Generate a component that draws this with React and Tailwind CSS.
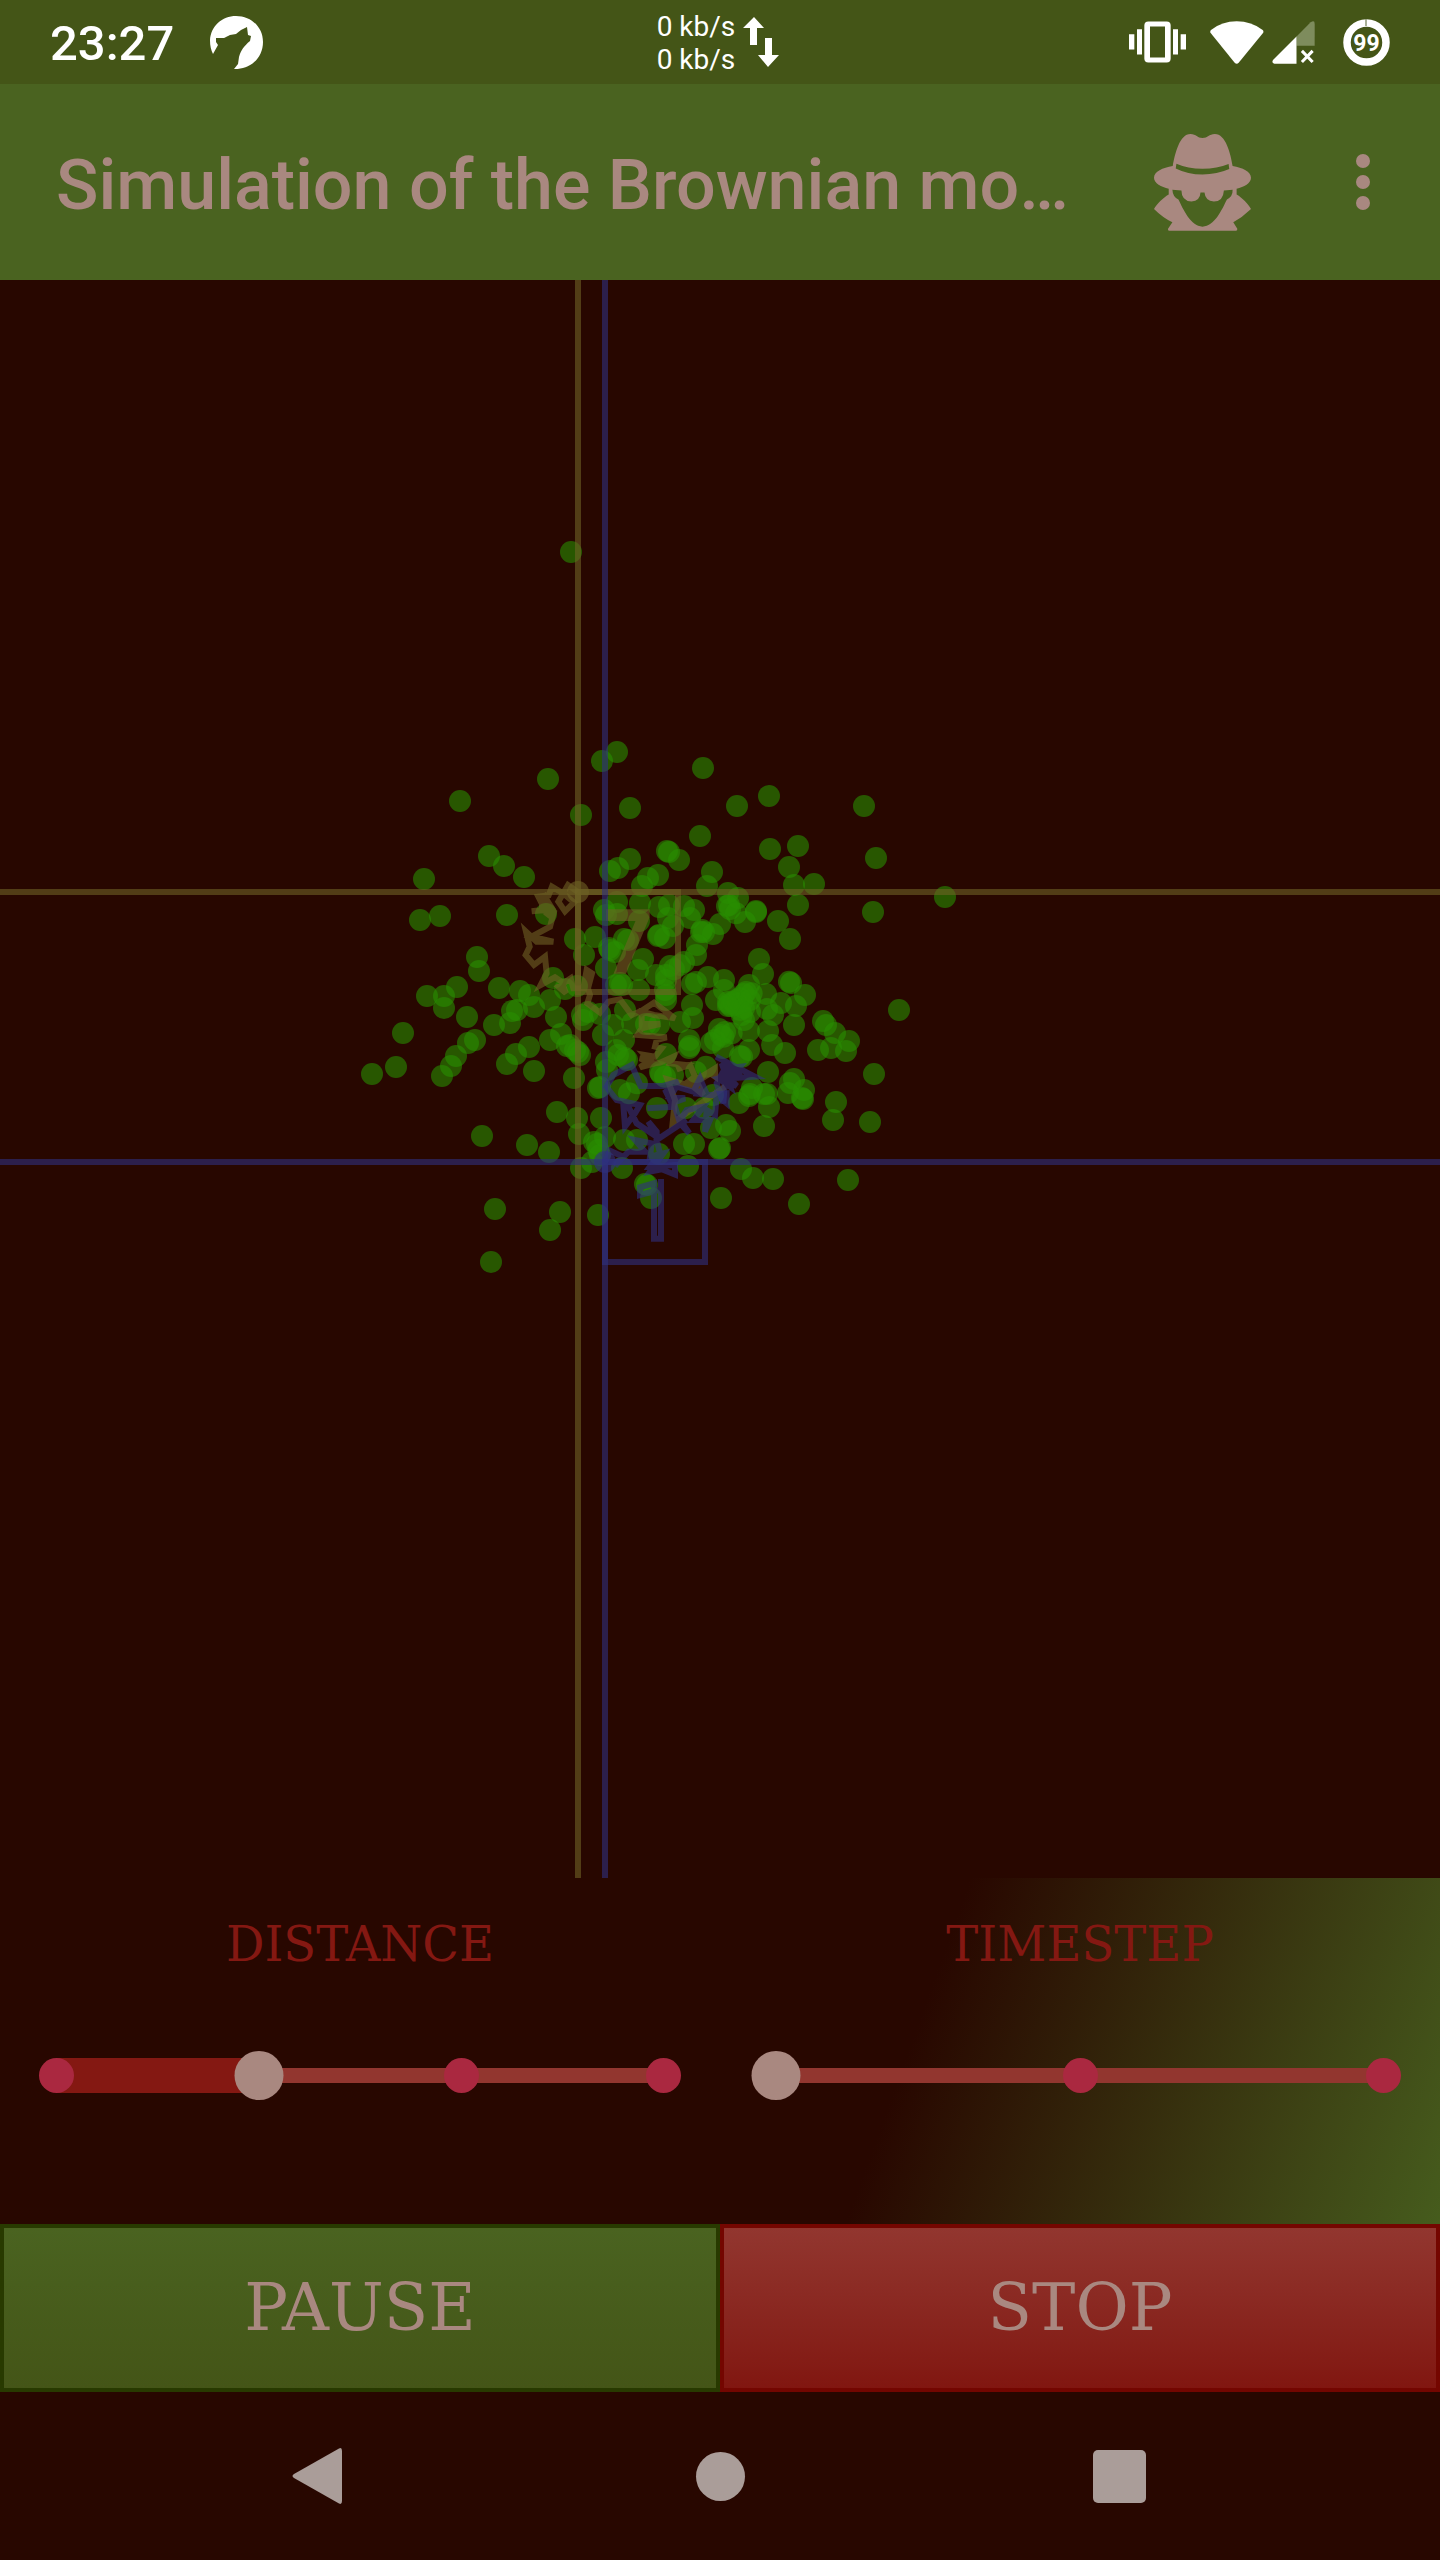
import React, { useState } from "react";

// Particle positions, grouped in tiles and given in thirds of a canvas unit.
const tiles = [
  { x: 571, y: 552, points: [[0, 0]] },
  {
    x: 350, y: 720,
    points: [[594,177],[330,243],[417,408],[462,438],[522,471],[222,477],[210,600],[270,588],[471,585],[588,582],[381,711],[387,753],[609,774]],
  },
  {
    x: 350, y: 980,
    points: [[231,48],[282,48],[321,21],[447,24],[510,33],[537,45],[282,84],[351,111],[552,81],[486,93],[501,90],[432,135],[480,129],[618,111],[159,159],[66,282],[138,261],[375,180],[354,189],[318,228],[303,258],[276,288],[537,201],[498,222],[471,252],[552,273],[600,180],[621,396],[396,468],[531,495],[597,516],[435,687],[630,696],[600,750],[423,846]],
  },
  {
    x: 560, y: 720,
    points: [[171,96],[126,123],[429,144],[210,264],[531,258],[627,228],[63,285],[420,348],[321,393],[327,396],[357,420],[210,417],[174,444],[150,453],[456,456],[264,474],[294,465],[246,498],[441,498],[630,387],[714,378],[687,441],[702,495],[714,555],[504,519],[534,534],[171,546],[240,549],[132,570],[138,585],[171,582],[237,603],[297,561],[327,555],[372,558],[402,570],[507,555],[510,567],[501,558],[588,573],[588,576],[555,606],[528,580],[654,603],[690,657],[324,594],[390,594],[480,612],[423,636],[432,636],[459,642],[426,630],[45,657],[105,651],[192,657],[204,660],[339,618],[294,648],[315,654],[297,645]],
  },
  {
    x: 560, y: 940,
    points: [[72,45],[150,30],[147,24],[165,36],[249,57],[234,90],[138,84],[288,105],[411,15],[408,45],[372,66],[360,75],[342,88],[330,78],[318,105],[318,120],[51,138],[15,147],[168,135],[180,129],[186,135],[237,150],[396,132],[408,126],[315,150],[318,165],[318,180],[396,195],[399,234],[360,246],[66,225],[84,216],[69,240],[120,222],[195,210],[216,250],[159,255],[129,285],[192,300],[168,330],[297,255],[270,252],[258,252],[174,345],[201,360],[195,354],[-30,180],[3,282],[30,315],[21,318],[45,330],[54,336],[60,345],[42,414],[138,366],[141,390],[120,441],[114,444],[180,450],[207,460],[231,430],[318,342],[303,402],[315,410],[300,396],[339,405],[387,300],[387,324],[390,318],[408,396],[291,504],[378,504],[51,534],[123,534],[57,582],[135,591],[192,600],[231,600],[102,606],[111,612],[115,630],[120,645],[96,666],[63,684],[186,684],[297,642],[372,612],[402,612],[384,678],[255,732],[261,735],[273,774],[114,825]],
  },
  {
    x: 700, y: 980,
    points: [[48,60],[72,30],[84,66],[87,72],[93,78],[99,66],[105,75],[110,60],[120,54],[126,66],[132,42],[138,36],[147,15],[24,-9],[72,0],[177,-63],[189,-18],[155,40],[150,60],[120,90],[125,105],[132,120],[132,84],[150,96],[84,78],[198,42],[201,87],[219,105],[267,5],[273,9],[315,45],[288,78],[243,69],[282,135],[57,147],[63,165],[75,156],[70,170],[45,180],[33,189],[95,160],[147,153],[204,153],[147,210],[120,228],[126,230],[216,195],[255,219],[69,204],[369,123],[378,135],[405,159],[354,210],[393,204],[447,183],[438,213],[597,90],[204,276],[282,297],[270,309],[264,339],[312,330],[306,354],[309,357],[156,324],[147,348],[150,342],[117,369],[207,381],[201,342],[192,342],[192,438],[78,435],[90,453],[57,507],[60,504],[33,444],[12,384],[39,345],[18,260],[522,282],[408,366],[399,420],[510,426],[123,567],[159,594],[219,597],[444,600],[297,672],[63,654]],
  },
  { x: 740, y: 740, points: [[372,198],[222,432],[408,354],[615,471],[399,516]] },
];

const particles = tiles.flatMap((t) => t.points.map(([x, y]) => [t.x + x / 3, t.y + y / 3]));

function WolfIcon() {
  return (
    <svg viewBox="0 0 53 53" className="h-[53px] w-[53px] fill-white" aria-hidden="true">
      <path d="M26 0C12 0 1 10 0 24C0 30 1 34 3 38L8 29L6 26V22H14L20 19L26 18L31 14L37 11L38 19L41 20L40 25C34 30 31 34 29 41L28 48L24 53C40 54 53 42 53 26C53 11 41 0 26 0Z" />
    </svg>
  );
}

function TrafficIcon() {
  return (
    <svg viewBox="0 0 36 50" className="h-[50px] w-9 fill-white" aria-hidden="true">
      <path d="M11 0L21 11H14V28H7V11H0ZM22 21H29V38H36L25 50L15 38H22Z" />
    </svg>
  );
}

function VibrateIcon() {
  return (
    <svg viewBox="30 62 171 125" className="h-[42px] w-[57px] fill-white" aria-hidden="true">
      <path d="M30 101H46V147H30ZM54 86H69V162H54ZM162 86H177V162H162ZM185 101H201V147H185Z" />
      <path fillRule="evenodd" d="M88 63H143Q155 63 155 75V174Q155 186 143 186H88Q76 186 76 174V75Q76 63 88 63ZM93 78V171H138V78Z" />
    </svg>
  );
}

function WifiIcon() {
  return (
    <svg viewBox="272 58 162 129" className="h-[43px] w-[54px] fill-white" aria-hidden="true">
      <path d="M275 85Q308 59 352 59T430 85Q434 89 431 94L358 183Q352 189 346 183L274 94Q271 89 275 85Z" />
    </svg>
  );
}

function SignalIcon() {
  return (
    <svg viewBox="458 65 128 128" className="h-[43px] w-[43px]" aria-hidden="true">
      <path d="M531 111L573 69Q585 61 585 73V139H531Z" fill="#7e8c5d" />
      <path d="M531 111V192H465Q456 190 461 181Z" fill="#fff" />
      <path d="M547 154L579 187M579 154L547 187" stroke="#fff" strokeWidth="9" />
    </svg>
  );
}

function BatteryIcon() {
  return (
    <svg viewBox="0 0 47 47" className="h-[47px] w-[47px]" role="img" aria-label="Battery 99 percent">
      <circle cx="23.5" cy="23.5" r="19.500" fill="none" stroke="#fff" strokeWidth="7.500" />
      <path d="M23 0V7" stroke="#8b9673" strokeWidth="1.500" />
      <text x="23.5" y="32" textAnchor="middle" fill="#fff" fontSize="23" fontWeight="700">
        99
      </text>
    </svg>
  );
}

function IncognitoIcon() {
  return (
    <svg viewBox="101 401 290 290" className="h-[97px] w-[97px] fill-[#a98880]" aria-hidden="true">
      <path
        fillRule="evenodd"
        d="M157 497C164 458 178 401 210 401C228 401 230 413 246 413S265 401 283 401C315 401 330 458 336 497C366 502 391 514 391 532C391 548 370 560 348 565V582C365 592 382 610 391 625Q365 650 338 665L350 684Q351 690 346 690H147Q141 690 143 684L156 665Q126 650 101 625C110 610 128 592 145 582V565C123 560 101 548 101 532C101 514 127 502 157 497ZM168 490L166 504Q202 522 246 522T326 506L324 491Q290 505 246 505T168 490ZM156 568Q157 590 174 597C188 625 210 677 246 678C283 677 305 625 319 597Q337 588 336 568L310 570Q308 603 280 603Q254 601 252 576H240Q239 601 213 603Q183 601 183 570Z"
      />
    </svg>
  );
}

function BrownianCanvas() {
  return (
    <svg viewBox="0 280 1440 1598" className="block h-auto w-full" role="img" aria-label="Brownian motion particles and trails">
      <g fill="#288e00" fillOpacity="0.6">
        {particles.map(([x, y], i) => (
          <circle key={i} cx={x} cy={y} r="11" />
        ))}
      </g>
      <g stroke="#6e6324" strokeOpacity="0.6" fill="none" strokeWidth="6">
        <path d="M578 280V1878" />
        <path d="M0 892H1440" />
        <path d="M578 892H678V992H578Z" />
        <circle cx="578" cy="892" r="11" fill="#6e6324" fillOpacity="0.6" stroke="none" />
        <g transform="translate(560 940) scale(0.33333)" strokeWidth="18">
          <path d="M54 -144L24 -165L-5 -115L15 -86L42 -113L10 -140L-24 -160L-34 -134L-65 -130L-55 -110L-44 -127L-30 -105L-54 -110L-54 -90L-85 -86L-40 -90L-20 -65L-40 -80L-35 -100L-18 -85L-30 -40L-85 -10L-20 5L-70 5L-102 -25L-91 20L-103 45L-78 75L-45 50L-40 100L-58 135L-15 112L5 125L18 160L-5 140L32 115L40 145L70 145L80 90L96 100L84 145L90 165L82 190L120 218L145 185L180 178L215 225L245 212L282 188L345 235L282 225L245 215V252H300L245 265L232 285L320 292L290 300L285 320L305 325L285 350L255 345L265 355L240 355L262 365L240 382L285 370L300 368L340 350L330 370L375 375L350 388L390 375L405 410L372 435L425 410L465 385V410L450 400L410 425L430 465L400 440L322 418L345 480L338 548L495 440" />
          <path d="M138 -66H240L174 92H192L260 -70V-83H138" />
        </g>
      </g>
      <g stroke="#2f317f" strokeOpacity="0.6" fill="none" strokeWidth="6">
        <path d="M605 280V1878" />
        <path d="M0 1162H1440" />
        <path d="M605 1162H705V1262H605Z" />
        <circle cx="605" cy="1162" r="11" fill="#2f317f" fillOpacity="0.6" stroke="none" />
        <g transform="translate(560 940) scale(0.33333)" strokeWidth="18">
          <path d="M135 666L150 632L185 648L165 678L205 635H255L225 600L275 610L270 650L310 640L270 695L305 688L345 704V675L270 680L300 640L290 600L380 540L290 600V575L265 545L290 590L230 550L205 500L190 495L195 560L225 520L240 495L170 480L150 455L140 440L160 405L215 375L242 438H310L355 425L318 455L335 490L375 475L330 470L350 440L400 455L420 415L435 450L400 460L450 465L500 460V490L470 465L465 525L440 510L435 575L450 540L400 540L430 500L380 510L360 540L388 580L360 550L345 500L262 505" />
          <path d="M468 350L585 410L510 415L530 438L495 425L490 490L470 430L495 385L540 380L520 405L485 370L510 440L475 415L545 395" />
          <path d="M303 717V896H282V730L240 742V765L295 750" />
        </g>
      </g>
    </svg>
  );
}

function StepSlider({ id, label, steps, initial }) {
  const [value, setValue] = useState(initial);
  const percent = `${(value / (steps - 1)) * 100}%`;
  return (
    <div className="flex flex-1 flex-col">
      <label
        htmlFor={id}
        className="pt-9 text-center text-[48px] leading-[60px] text-[#841812] [font-family:'DejaVu_Serif',serif]"
      >
        {label}
      </label>
      <div className="relative mx-14 mt-[77px] h-[49px]">
        <div className="absolute inset-x-0 top-[17px] h-[15px] bg-[#92362f]" />
        <div className="absolute left-0 top-[7px] h-[35px] bg-[#841812]" style={{ width: percent }} />
        <div className="absolute -inset-x-[17px] top-[7px] flex justify-between">
          {Array.from({ length: steps }, (_, i) => (
            <span
              key={i}
              className={i === value ? "invisible size-[35px]" : "size-[35px] rounded-full bg-[#aa2840]"}
            />
          ))}
        </div>
        <div
          className="absolute top-0 size-[49px] -translate-x-1/2 rounded-full bg-[#a98880]"
          style={{ left: percent }}
        />
        <input
          id={id}
          type="range"
          min="0"
          max={steps - 1}
          step="1"
          value={value}
          onChange={(e) => setValue(Number(e.target.value))}
          className="absolute inset-0 h-full w-full cursor-pointer opacity-0"
        />
      </div>
    </div>
  );
}

export default function App() {
  return (
    <div className="flex min-h-screen flex-col bg-[#280700] [font-family:Roboto,sans-serif]">
      <div className="grid h-[84px] grid-cols-[1fr_auto_1fr] items-center bg-[#445517] px-[50px] text-white">
        <div className="flex items-center gap-9">
          <span className="pt-1 text-[49px] leading-[60px] font-medium">23:27</span>
          <WolfIcon />
        </div>
        <div className="flex items-center gap-2 pr-1">
          <div className="pt-0.5 text-[28px] leading-[33px]">
            <p>0 kb/s</p>
            <p>0 kb/s</p>
          </div>
          <TrafficIcon />
        </div>
        <div className="flex items-center justify-end">
          <VibrateIcon />
          <span className="w-6" />
          <WifiIcon />
          <span className="w-2" />
          <SignalIcon />
          <span className="w-7" />
          <BatteryIcon />
        </div>
      </div>

      <header className="flex h-[196px] items-center bg-[#4a6320] pr-[29px] pl-14 text-[#a98880]">
        <h1 className="min-w-0 flex-1 truncate pt-1.5 text-[70px] leading-[84px] font-medium">
          Simulation of the Brownian mo…
        </h1>
        <button type="button" aria-label="Incognito" className="mr-16">
          <IncognitoIcon />
        </button>
        <button type="button" aria-label="More options" className="flex w-24 flex-col items-center gap-[7px] py-4">
          <span className="size-[14px] rounded-full bg-[#a98880]" />
          <span className="size-[14px] rounded-full bg-[#a98880]" />
          <span className="size-[14px] rounded-full bg-[#a98880]" />
        </button>
      </header>

      <main className="flex flex-col">
        <BrownianCanvas />
        <section className="flex h-[346px] bg-[linear-gradient(110deg,#280700_62%,#465c1d_100%)]">
          <StepSlider id="distance" label="DISTANCE" steps={4} initial={1} />
          <StepSlider id="timestep" label="TIMESTEP" steps={3} initial={0} />
        </section>
        <div className="grid h-[168px] grid-cols-2 text-[65px] text-[#a98880] [font-family:'DejaVu_Serif',serif] [text-shadow:2px_3px_4px_rgba(0,0,0,0.5)]">
          <button type="button" className="border-4 border-[#283a00] bg-linear-to-b from-[#4a6320] to-[#445517]">
            PAUSE
          </button>
          <button type="button" className="border-4 border-[#740600] bg-linear-to-b from-[#92362f] to-[#811610]">
            STOP
          </button>
        </div>
      </main>

      <nav className="grid h-[168px] grid-cols-[634fr_172fr_626fr] items-center pr-2">
        <button type="button" aria-label="Back" className="justify-self-center">
          <svg viewBox="0 0 50 56" className="h-14 w-[50px] fill-[#aa9d99]" aria-hidden="true">
            <path d="M47 0.500Q50 -1 50 3V53Q50 57 47 55.500L2 30Q-1 28 2 26Z" />
          </svg>
        </button>
        <button type="button" aria-label="Home" className="size-[49px] justify-self-center rounded-full bg-[#aa9d99]" />
        <button type="button" aria-label="Recent apps" className="size-[53px] justify-self-center rounded-[5px] bg-[#aa9d99]" />
      </nav>
    </div>
  );
}
